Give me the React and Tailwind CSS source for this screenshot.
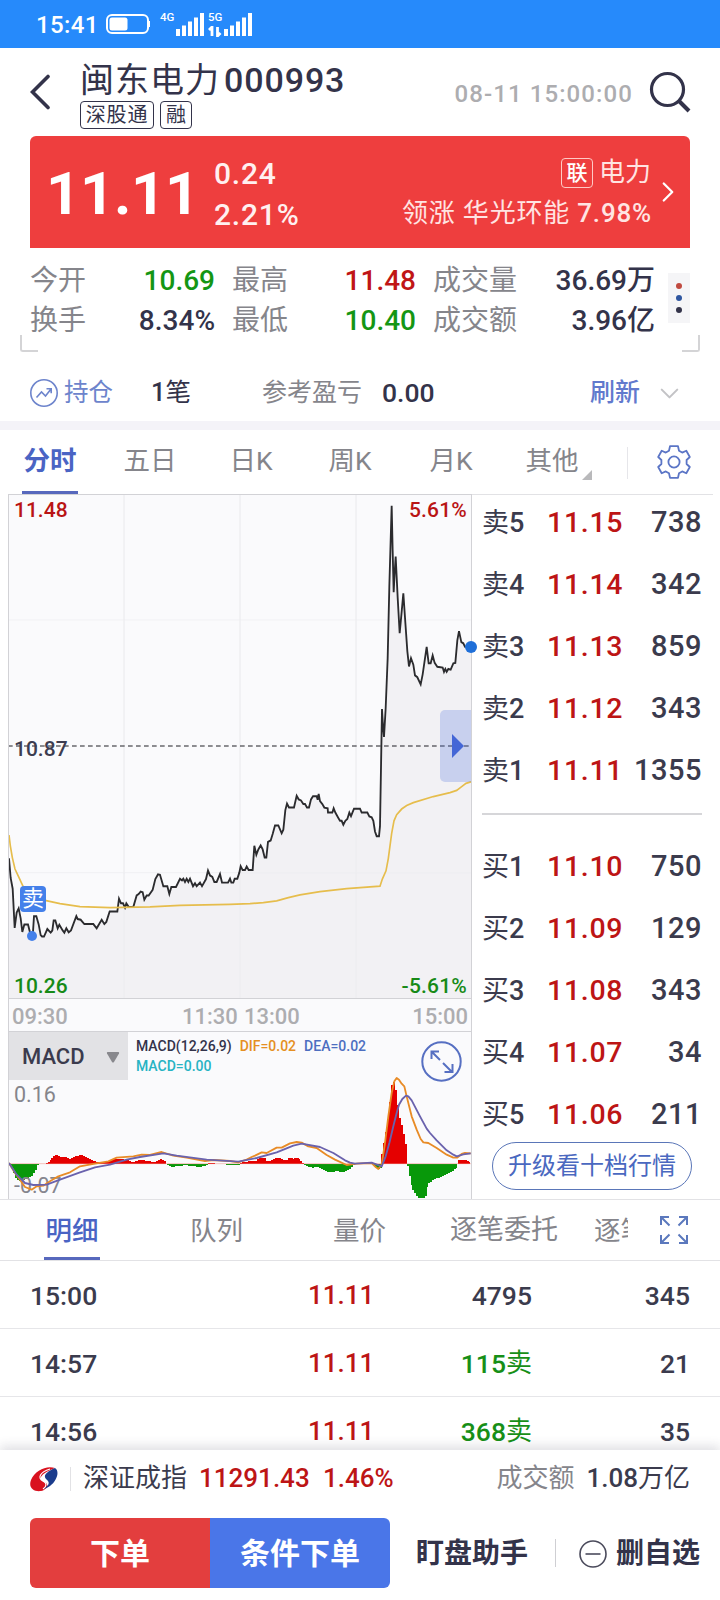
import React, { useState } from "react";
import { ChevronRight, ChevronDown } from "lucide-react";

const stats = [
  [
    { label: "今开", value: "10.69", color: "text-[#149614]" },
    { label: "最高", value: "11.48", color: "text-[#c01616]" },
    { label: "成交量", value: "36.69万", color: "text-[#33334a]" },
  ],
  [
    { label: "换手", value: "8.34%", color: "text-[#33334a]" },
    { label: "最低", value: "10.40", color: "text-[#149614]" },
    { label: "成交额", value: "3.96亿", color: "text-[#33334a]" },
  ],
];

const asks = [
  ["卖", 5, "11.15", 738],
  ["卖", 4, "11.14", 342],
  ["卖", 3, "11.13", 859],
  ["卖", 2, "11.12", 343],
  ["卖", 1, "11.11", 1355],
];

const bids = [
  ["买", 1, "11.10", 750],
  ["买", 2, "11.09", 129],
  ["买", 3, "11.08", 343],
  ["买", 4, "11.07", 34],
  ["买", 5, "11.06", 211],
];

const trades = [
  { time: "15:00", price: "11.11", volume: "4795", side: "", count: 345 },
  { time: "14:57", price: "11.11", volume: "115", side: "卖", count: 21 },
  { time: "14:56", price: "11.11", volume: "368", side: "卖", count: 35 },
];

const PRICE =
  "27,1060 32,1115 38,1145 44,1255 50,1212 56,1200 62,1228 67,1266 73,1245 84,1245 92,1275 98,1280 102,1222 109,1222 116,1245 122,1275 126,1279 132,1279 142,1258 152,1268 157,1262 161,1234 166,1234 173,1256 178,1246 188,1262 193,1268 199,1256 206,1267 213,1262 229,1222 233,1230 242,1232 253,1244 280,1244 290,1256 305,1232 313,1244 319,1238 329,1209 352,1209 357,1173 363,1186 369,1186 375,1198 379,1186 386,1196 400,1196 410,1164 416,1160 422,1153 428,1155 433,1176 440,1164 446,1164 458,1148 466,1118 474,1105 480,1106 490,1138 502,1138 508,1160 514,1140 528,1140 540,1117 546,1122 550,1117 555,1126 560,1117 565,1126 570,1117 579,1138 585,1130 590,1138 600,1128 606,1138 618,1118 624,1094 630,1108 637,1112 643,1126 650,1126 660,1104 666,1128 684,1128 690,1117 694,1128 700,1128 704,1117 712,1117 718,1100 722,1082 728,1093 735,1093 740,1083 746,1093 758,1093 763,1025 769,1050 775,1035 782,1024 788,1035 794,1058 799,1058 804,1014 812,1010 818,992 825,968 835,968 845,990 850,980 856,925 861,907 867,918 882,918 890,885 896,895 903,898 910,908 915,908 921,918 927,918 933,895 939,886 950,886 953,896 956,880 960,900 967,908 973,918 983,920 984,932 997,932 1001,920 1006,932 1015,947 1020,955 1025,955 1030,966 1036,955 1042,950 1048,932 1053,942 1062,921 1080,921 1085,932 1102,932 1108,943 1115,945 1120,955 1125,985 1130,998 1137,998 1140,970 1146,642 1149,690 1152,720 1157,640 1163,500 1168,300 1175,73 1178,200 1181,315 1184,260 1187,215 1193,330 1199,430 1204,380 1210,318 1216,400 1222,480 1227,523 1233,500 1240,518 1245,548 1252,553 1262,573 1268,545 1280,468 1286,514 1292,514 1298,492 1304,513 1312,524 1328,526 1332,538 1336,530 1340,538 1345,530 1352,532 1360,514 1366,513 1372,450 1377,424 1384,455 1390,458 1395,468 1413,468";

const AVERAGE =
  "27,995 31,1025 37,1058 45,1090 56,1112 65,1130 75,1150 100,1168 135,1178 180,1187 240,1195 330,1198 450,1196 540,1192 690,1189 750,1187 790,1184 830,1179 865,1170 900,1162 960,1153 1040,1145 1140,1138 1147,1118 1158,1095 1165,1060 1175,990 1182,955 1190,938 1205,922 1220,912 1240,904 1300,887 1350,876 1370,870 1384,860 1398,850 1413,846";

const DIF =
  "27,490 45,520 60,540 75,562 95,570 110,560 130,558 150,545 175,530 210,518 240,500 285,492 325,485 350,474 400,470 425,465 450,466 485,457 520,468 560,474 615,484 640,481 690,484 715,488 740,480 755,472 765,468 785,458 800,460 830,444 845,444 870,431 890,427 905,429 925,440 950,445 980,466 1005,480 1040,496 1070,492 1115,490 1128,503 1135,508 1145,495 1155,430 1165,350 1175,280 1183,245 1190,235 1197,240 1205,252 1213,260 1220,290 1235,350 1250,390 1262,418 1270,428 1285,430 1310,445 1340,465 1360,474 1372,474 1385,463 1395,460 1412,461";

const DEA =
  "27,490 50,525 75,550 100,556 140,555 180,540 240,518 285,503 330,495 380,480 420,472 490,461 530,468 620,480 715,486 770,475 830,458 880,438 905,432 960,442 1000,460 1035,482 1050,489 1065,492 1115,489 1145,500 1157,470 1168,430 1180,380 1190,340 1197,315 1207,298 1218,288 1225,290 1235,302 1260,350 1280,387 1290,400 1310,422 1340,452 1360,465 1370,470 1390,464 1412,461";

// histogram envelopes as [x, height]; positive is red, negative is green
const HIST = [
  [[27, -2], [34, -14], [40, -34], [48, -50], [58, -52], [75, -45], [88, -40], [104, -18], [110, 0]],
  [[137, 2], [150, 12], [158, 22], [168, 26], [178, 21], [190, 21], [205, 14], [214, 16], [224, 23], [240, 26], [256, 18], [270, 10], [300, 4], [325, 8], [340, 15], [360, 14], [380, 10], [395, 5], [410, 9], [425, 12], [440, 7], [460, 5], [472, 12], [482, 14], [495, 5]],
  [[500, -4], [512, -10], [530, -6], [560, -5], [590, -9], [612, -8], [620, -2]],
  [[625, 2], [637, 2]],
  [[665, -2], [690, -4], [712, -3]],
  [[720, 2], [735, 6], [750, 7], [765, 8], [775, 15], [790, 18], [796, 8], [805, 7], [828, 19], [842, 15], [850, 9], [860, 12], [868, 20], [875, 14], [885, 18], [897, 12], [908, 1]],
  [[912, -3], [920, -8], [935, -13], [950, -9], [970, -20], [990, -27], [1010, -22], [1020, -26], [1040, -20], [1055, -8], [1060, 0]],
  [[1122, -6], [1132, -18], [1143, -12]],
  [[1143, 30], [1152, 80], [1160, 130], [1168, 200], [1173, 246], [1178, 246], [1186, 210], [1192, 150], [1200, 120], [1210, 75], [1216, 35], [1218, 20]],
  [[1220, -8], [1228, -50], [1236, -78], [1244, -88], [1252, -103], [1265, -105], [1273, -95], [1280, -62], [1296, -48], [1320, -40], [1350, -25], [1370, -8]],
  [[1375, 11], [1390, 12], [1408, 3]],
];

const STEP = 5.8;

const bars = HIST.flatMap((pts) => {
  const out = [];
  let i = 0;
  for (let x = pts[0][0]; x < pts[pts.length - 1][0]; x += STEP) {
    while (i < pts.length - 2 && pts[i + 1][0] < x) i++;
    const [x0, h0] = pts[i];
    const [x1, h1] = pts[i + 1];
    out.push({ x, h: h0 + ((h1 - h0) * (x - x0)) / (x1 - x0) });
  }
  return out;
});

const SignalBars = () => (
  <svg width="29" height="24" viewBox="0 0 29 24" fill="#fff">
    <rect x="0" y="16" width="4" height="7" />
    <rect x="6" y="12.5" width="4" height="10.5" />
    <rect x="12" y="8.5" width="4" height="14.5" />
    <rect x="18" y="4.5" width="4" height="18.5" />
    <rect x="24" y="0" width="4" height="23" />
  </svg>
);

const StatusBar = () => (
  <div className="flex h-12 items-start bg-[#268afb] pl-[36px] text-white">
    <span className="mt-[13px] w-[70px] text-[24px] font-medium leading-6 tracking-[0.4px]">15:41</span>
    <svg className="mt-[13px]" width="45" height="22" viewBox="0 0 45 22" fill="none">
      <rect x="1" y="2" width="41" height="18" rx="5" stroke="#fff" strokeWidth="2" />
      <rect x="3.5" y="4.5" width="18" height="13" rx="2.5" fill="#fff" />
      <path d="M43 8v6" stroke="#fff" strokeWidth="2" />
    </svg>
    <span className="ml-[9px] mt-[12px] w-4 text-[11.5px] font-medium leading-[11px]">4G</span>
    <div className="mt-[13px]">
      <SignalBars />
    </div>
    <div className="ml-[3px] mt-[12px] w-4">
      <div className="text-[11.5px] font-medium leading-[11px]">5G</div>
      <svg className="mt-[3px]" width="14" height="11" viewBox="0 0 14 11" fill="none" stroke="#fff" strokeWidth="2.8">
        <path d="M1 4l3-3v9M12.500 7l-3 3V1" />
      </svg>
    </div>
    <div className="mt-[13px]">
      <SignalBars />
    </div>
  </div>
);

const Header = () => (
  <div className="flex h-[88px] pl-[30px]">
    <svg className="mt-[26px]" width="22" height="36" viewBox="0 0 22 36" fill="none">
      <path d="M18 2.5L2.5 18 18 33.5" stroke="#33334a" strokeWidth="3.6" strokeLinecap="round" />
    </svg>
    <div className="ml-[28px] mt-[12px] w-[360px] text-[#33334a]">
      <div className="flex h-10 items-center whitespace-nowrap text-[34px] leading-10 tracking-[1px]">
        闽东电力<span className="ml-[4px] font-medium tracking-[0.9px]">000993</span>
      </div>
      <div className="mt-px flex gap-[6px] text-[20px] leading-[26px]">
        <span className="h-7 w-[74px] rounded-[4px] border border-[#33334a] text-center tracking-[0.8px]">深股通</span>
        <span className="h-7 w-8 rounded-[4px] border border-[#33334a] text-center">融</span>
      </div>
    </div>
    <div className="mt-[30px] w-[193px] text-right text-[24px] font-medium leading-[32px] tracking-[1.100px] text-[#adadb0]">
      08-11 15:00:00
    </div>
    <svg className="ml-[16px] mt-[22px]" width="44" height="44" viewBox="0 0 44 44" fill="none" stroke="#33334a">
      <circle cx="18.5" cy="19.5" r="16" strokeWidth="3.2" />
      <path d="M30 31l10 10" strokeWidth="4" />
    </svg>
  </div>
);

const QuoteCard = () => (
  <div className="mx-[30px] flex h-28 rounded-t-[6px] bg-[#ee3e3e] text-white">
    <div className="w-[184px] pl-[16px] pt-[26px] text-[60px] font-bold leading-[64px] tracking-[-0.400px]">11.11</div>
    <div className="w-[130px] pt-[17px] text-[30px] font-medium leading-[41px] tracking-[0.800px] text-[#fff0f0]">
      <div>0.24</div>
      <div>2.21%</div>
    </div>
    <div className="flex flex-1 flex-col items-end pt-[16px] text-[26px] leading-[41px] text-[#ffe4e2]">
      <div className="flex items-center">
        <span className="mr-[6px] h-[30px] w-8 rounded-[4px] border border-[#ffc9c5] text-center text-[21px] font-medium leading-[29px] text-white">联</span>
        <span className="text-[26px]">电力</span>
      </div>
      <div className="-mr-px whitespace-nowrap tracking-[0.8px]">
        领涨 华光环能 <span className="font-medium">7.98%</span>
      </div>
    </div>
    <ChevronRight className="mr-[5px] mt-[39px]" size={34} strokeWidth={1.6} />
  </div>
);

const labelWidths = ["w-[68px]", "w-[78px]", "w-[92px]"];
const valueWidths = ["w-[117px]", "w-[106px]", "w-[130px]"];

const Stats = () => (
  <div className="relative flex h-[104px] pl-[30px] pt-[12px]">
    <div className="w-[625px] pt-px">
      {stats.map((row, r) => (
        <div key={r} className="flex h-10 items-center whitespace-nowrap text-[28px] leading-10">
          {row.map((s, i) => (
            <React.Fragment key={s.label}>
              <span className={`${labelWidths[i]} shrink-0 text-[#85858b]`}>{s.label}</span>
              <span className={`${valueWidths[i]} flex shrink-0 justify-end font-medium ${s.color}`}>{s.value}</span>
              {i < 2 && <span className="w-[17px] shrink-0" />}
            </React.Fragment>
          ))}
        </div>
      ))}
    </div>
    <div className="ml-[13px] mt-[13px] flex h-[50px] w-[22px] flex-col items-center justify-center gap-[6px] bg-[#f5f5f7]">
      <i className="size-[6px] rounded-full bg-[#c04a40]" />
      <i className="size-[6px] rounded-full bg-[#2f56a0]" />
      <i className="size-[6px] rounded-full bg-[#33334a]" />
    </div>
    <i className="absolute bottom-0 left-[20px] h-[17px] w-[18px] rounded-bl-[3px] border-b-2 border-l-2 border-[#d4d4d6]" />
    <i className="absolute bottom-0 right-[20px] h-[17px] w-[18px] rounded-br-[3px] border-b-2 border-r-2 border-[#d4d4d6]" />
  </div>
);

const Position = () => (
  <div className="flex h-[69px] items-center whitespace-nowrap pl-[30px] pt-[12px] text-[25px]">
    <svg width="28" height="28" viewBox="0 0 28 28" fill="none" stroke="#6d84cc" strokeWidth="1.6">
      <circle cx="14" cy="14" r="13.2" />
      <path d="M6.5 18.5l5-5.5 4 4 5.500-7M16.500 9.800h4.700v4.500" />
    </svg>
    <span className="ml-[6px] w-[87px] pt-px text-[24.500px] text-[#6d84cc]">持仓</span>
    <span className="w-[111px] text-[25.500px] text-[#33334a]">
      <span className="font-medium">1</span>笔
    </span>
    <span className="w-[120px] pt-px text-[#85858b]">参考盈亏</span>
    <span className="w-[208px] pt-px text-[26.500px] font-medium text-[#33334a]">0.00</span>
    <span className="w-[64px] pt-px font-medium text-[#6179cd]">刷新</span>
    <ChevronDown className="mt-px text-[#c3c3c6]" size={31} strokeWidth={1.6} />
  </div>
);

const periods = [
  { name: "分时", width: "w-[56px]", gap: "ml-[22px]" },
  { name: "五日", width: "w-[60px]", gap: "ml-[42px]" },
  { name: "日K", width: "w-[60px]", gap: "ml-[41px]" },
  { name: "周K", width: "w-[60px]", gap: "ml-[39px]" },
  { name: "月K", width: "w-[60px]", gap: "ml-[41px]" },
  { name: "其他", width: "w-[60px]", gap: "ml-[41px]" },
];

const PeriodTabs = ({ active, onChange }) => (
  <div className="flex h-16">
    {periods.map((p) => (
      <button
        key={p.name}
        onClick={() => onChange(p.name)}
        className={`${p.gap} ${p.width} h-16 border-b-[3px] pt-px text-[26.5px] leading-[60px] ${
          active === p.name ? "border-[#5768bd] font-bold text-[#4a64c4]" : "border-transparent text-[#85858b]"
        }`}
      >
        {p.name}
      </button>
    ))}
    <svg className="mt-[40px]" width="11" height="11" viewBox="0 0 11 11">
      <path d="M10 0v10H0z" fill="#b9b9bb" />
    </svg>
    <i className="ml-[34px] mt-[17px] h-8 w-px bg-[#e6e6ea]" />
    <svg className="ml-[29px] mt-[15px]" width="34" height="34" viewBox="-17 -17 34 34" fill="none" stroke="#5b75c6" strokeWidth="1.8" strokeLinejoin="round">
      <circle r="5.600" />
      <path d="M-4 -15.800H4L5 -11.300L8.200 -9.400L12.300 -11.200L15.800 -5L12.600 -2V2L15.800 5L12.300 11.200L8.200 9.400L5 11.300L4 15.800H-4L-5 11.300L-8.200 9.400L-12.300 11.200L-15.800 5L-12.600 2V-2L-15.800 -5L-12.300 -11.200L-8.200 -9.400L-5 -11.300Z" />
    </svg>
  </div>
);

const PriceChart = () => (
  <div className="relative h-[504px] border-b border-[#d2d2d6] text-[21px] font-medium leading-6">
    <svg className="block" width="462" height="503" viewBox="27 43 1386 1408" preserveAspectRatio="none" fill="none">
      <path d={`M${PRICE.split(" ").join("L")}V1451H27Z`} fill="#f2f1f4" />
      <g stroke="#ededf1" strokeWidth="4">
        <path d="M372 40V1451M720 40V1451M1068 40V1451" />
        <path d="M24 393H1413M24 1100H1413" strokeWidth="2" />
      </g>
      <path d="M24 745.500H1413" stroke="#1f1f24" strokeWidth="3" strokeDasharray="14 10" />
      <polyline points={PRICE} stroke="#2b2b2e" strokeWidth="5.5" />
      <polyline points={AVERAGE} stroke="#e6bd4c" strokeWidth="5" />
    </svg>
    <span className="absolute left-[5px] top-[3px] text-[#b91414]">11.48</span>
    <span className="absolute right-[4px] top-[3px] tracking-[0.2px] text-[#b91414]">5.61%</span>
    <span className="absolute left-[5px] top-[242px] text-[#3d3d50]">10.87</span>
    <span className="absolute bottom-0 left-[5px] text-[#178a17]">10.26</span>
    <span className="absolute bottom-0 right-[4px] tracking-[0.2px] text-[#178a17]">-5.61%</span>
    <span className="absolute left-[11px] top-[391px] h-[26px] w-[26px] rounded-[4px] bg-[#4480ea] text-center text-[22px] font-normal leading-[26px] text-white">卖</span>
    <i className="absolute left-[18px] top-[436px] size-[10px] rounded-full bg-[#4480ea]" />
    <div className="absolute right-0 top-[215px] flex h-[72px] w-[31px] items-center rounded-l-[5px] bg-[#4a6fdc]/25 pl-[12px]">
      <svg width="12" height="24" viewBox="0 0 12 24">
        <path d="M0 0l12 12L0 24z" fill="#4466d6" />
      </svg>
    </div>
    <i className="absolute -right-[6px] top-[146px] size-[12px] rounded-full bg-[#1f6fd8]" />
  </div>
);

const MacdChart = () => (
  <div className="relative h-[167px] text-[14px] font-medium">
    <svg className="block" width="462" height="167" viewBox="27 97 1386 501" preserveAspectRatio="none" fill="none">
      {bars.map((b, i) => (
        <rect
          key={i}
          x={b.x}
          y={b.h > 0 ? 492 - b.h : 492}
          width={STEP + 1.5}
          height={Math.abs(b.h)}
          fill={b.h > 0 ? "#e50000" : "#08980a"}
          shapeRendering="crispEdges"
        />
      ))}
      <path d="M27 492H1413" stroke="#f08a80" strokeWidth="1.5" />
      <text x="42" y="581" fontSize="64" fontWeight="400" fill="#85858e" className="font-['Roboto',sans-serif]">-0.07</text>
      <polyline points={DIF} stroke="#e88b26" strokeWidth="5.500" strokeLinejoin="round" />
      <polyline points={DEA} stroke="#6a62ad" strokeWidth="5.500" strokeLinejoin="round" />
    </svg>
    <button className="absolute left-0 top-0 flex h-12 w-[119px] items-center justify-between bg-[#e2e2e5] pl-[13px] pr-[8px] pt-px text-[22px] text-[#3b3b4d]">
      MACD
      <svg width="14" height="12" viewBox="0 0 14 12">
        <path d="M1.500 1h11q1 0 .5 1.500L8 11q-1 1-2 0L1 2.500Q.5 1 1.500 1z" fill="#88888d" />
      </svg>
    </button>
    <div className="absolute left-[127px] top-[4px] w-[260px] whitespace-nowrap leading-5">
      <span className="text-[#33334a]">MACD(12,26,9)</span>
      <span className="ml-[8px] text-[#e58f22]">DIF=0.02</span>
      <span className="ml-[8px] text-[#4d6ec0]">DEA=0.02</span>
      <div className="text-[#27b3c3]">MACD=0.00</div>
    </div>
    <span className="absolute left-[5px] top-[51px] text-[21.500px] font-normal leading-6 text-[#85858b]">0.16</span>
    <svg className="absolute right-[9px] top-[9px]" width="41" height="41" viewBox="0 0 41 41" fill="none" stroke="#566fc2" strokeWidth="2">
      <circle cx="20.500" cy="20.500" r="19.200" />
      <path d="M19 19l-8.500-8.500M10.500 18v-7.500H18M22 22l9 9M31.500 23v8H23.500" />
    </svg>
  </div>
);

const Level = ({ row }) => (
  <div className="flex h-[62px] items-center whitespace-nowrap text-[#3b3b4d]">
    <span className="w-[65px] text-[27px]">
      {row[0]}
      <span className="font-medium">{row[1]}</span>
    </span>
    <span className="w-[80px] text-[28.5px] font-medium tracking-[0.7px] text-[#bd1515]">{row[2]}</span>
    <span className="flex flex-1 justify-end text-[29px] font-medium tracking-[0.500px]">{row[3]}</span>
  </div>
);

const OrderBook = () => (
  <div className="flex w-[241px] flex-col border-t border-[#e2e2e5] pl-[10px] pr-[11px]">
    <div className="-mt-[3px]">
      {asks.map((r) => (
        <Level key={r[1]} row={r} />
      ))}
    </div>
    <i className="mt-[11px] h-[2px] w-[220px] shrink-0 bg-[#d6d6d9]" />
    <div className="mt-[21px]">
      {bids.map((r) => (
        <Level key={r[1]} row={r} />
      ))}
    </div>
    <button className="ml-[10px] mt-[-4px] h-12 w-[200px] shrink-0 rounded-full border border-[#5a76b8] text-center text-[24px] leading-[47px] text-[#4a68c0]">
      升级看十档行情
    </button>
  </div>
);

const DetailTabs = () => (
  <div className="flex h-[62px] whitespace-nowrap border-b border-t border-[#e2e2e5] text-[26.5px] leading-[61px] text-[#85858b]">
    <span className="ml-[44px] h-[60px] w-[56px] border-b-[3px] border-[#5768bd] text-center font-medium text-[#4a64c4]">明细</span>
    <span className="ml-[90px] w-[143px]">队列</span>
    <span className="w-[117px]">量价</span>
    <span className="w-[144px] text-[27px]">逐笔委托</span>
    <span className="w-[34px] overflow-hidden">逐笔成交</span>
    <svg className="ml-[32px] mt-[16px]" width="28" height="28" viewBox="0 0 28 28" fill="none" stroke="#5b78bd" strokeWidth="2">
      <path d="M9.500 9.500L1 1M1 9V1h8M18.500 9.500L27 1M19 1h8v8M9.500 18.500L1 27M1 19v8h8M18.500 18.500L27 27M27 19v8h-8" />
    </svg>
  </div>
);

const Trades = () => (
  <div className="h-[189px] overflow-hidden">
    {trades.map((t) => (
      <div key={t.time} className="flex h-[68px] items-center border-b border-[#e6e6e9] px-[30px] pt-[2px] text-[26.500px] font-medium text-[#3b3b4d]">
        <span className="w-[278px]">{t.time}</span>
        <span className="w-[84px] text-[26px] text-[#bd1515]">{t.price}</span>
        <span className={`flex w-[140px] justify-end ${t.side ? "text-[#178f17]" : ""}`}>
          {t.volume}
          {t.side && <span className="text-[26px] font-normal">{t.side}</span>}
        </span>
        <span className="flex flex-1 justify-end">{t.count}</span>
      </div>
    ))}
  </div>
);

const IndexBar = () => (
  <div className="relative flex h-[68px] items-center whitespace-nowrap bg-white px-[30px] pb-[11px] text-[26px] shadow-[0_-4px_10px_rgba(60,60,90,0.16)]">
    <svg width="28" height="26" viewBox="0 0 28 26">
      <path d="M25 2C17-1 5 4 1 14c-3 8 3 12 10 11 6-1 9-7 3-9-5-2-4-6 1-9 3-2 7-4 10-5z" fill="#d9121f" />
      <path d="M25 2c5 3 2 13-5 18-3 2-5 3-7 3 7-4 7-7 3-10-3-3 0-7 9-11z" fill="#1b3c8c" />
      <path d="M20 3C10 6 7 12 13 15c4 2 4 5 0 8" fill="none" stroke="#fff" strokeWidth="1.200" />
    </svg>
    <i className="ml-[12px] h-6 w-px bg-[#e2e2e5]" />
    <span className="ml-[12px] w-[116px] text-[#3b3b4d]">深证成指</span>
    <span className="w-[124px] font-medium text-[#bd1515]">11291.43</span>
    <span className="font-medium text-[#bd1515]">1.46%</span>
    <span className="ml-auto text-[#85858b]">成交额</span>
    <span className="ml-[12px] text-[#3b3b4d]">
      <span className="font-medium">1.08</span>万亿
    </span>
  </div>
);

const ActionBar = () => (
  <div className="relative flex h-[82px] items-start whitespace-nowrap bg-white pl-[30px] text-[30px] font-bold leading-[72px]">
    <button className="h-[70px] w-[180px] rounded-l-[6px] bg-[#e33e3e] text-white">下单</button>
    <button className="h-[70px] w-[180px] rounded-r-[6px] bg-[#4a76e8] text-white">条件下单</button>
    <span className="ml-[26px] w-[139px] text-[28px] text-[#33334a]">盯盘助手</span>
    <i className="mt-[21px] h-7 w-px bg-[#cfcfd3]" />
    <svg className="ml-[23px] mt-[22px]" width="28" height="28" viewBox="0 0 28 28" fill="none" stroke="#4b4b5c" strokeWidth="1.600">
      <circle cx="14" cy="14" r="13" />
      <path d="M6.500 14h15" />
    </svg>
    <span className="ml-[9px] text-[28px] text-[#33334a]">删自选</span>
  </div>
);

const App = () => {
  const [period, setPeriod] = useState("分时");

  return (
    <div className="h-[1600px] w-[720px] overflow-hidden bg-white font-['Roboto','Noto_Sans_CJK_SC',sans-serif]">
      <StatusBar />
      <Header />
      <QuoteCard />
      <Stats />
      <Position />
      <div className="h-[9px] bg-[#f4f3f8]" />
      <PeriodTabs active={period} onChange={setPeriod} />
      <div className="flex h-[705px] pl-[8px]">
        <div className="w-[464px] border-l border-r border-t border-[#d2d2d6] bg-[#fafafc]">
          <PriceChart />
          <div className="flex h-[33px] items-center border-b border-[#d2d2d6] px-[3px] pt-[3px] text-[22px] font-medium text-[#adadb0]">
            <span className="w-[170px]">09:30</span>
            <span className="w-[62px]">11:30</span>
            <span className="flex-1">13:00</span>
            <span>15:00</span>
          </div>
          <MacdChart />
        </div>
        <OrderBook />
      </div>
      <DetailTabs />
      <Trades />
      <IndexBar />
      <ActionBar />
    </div>
  );
};

export default App;
